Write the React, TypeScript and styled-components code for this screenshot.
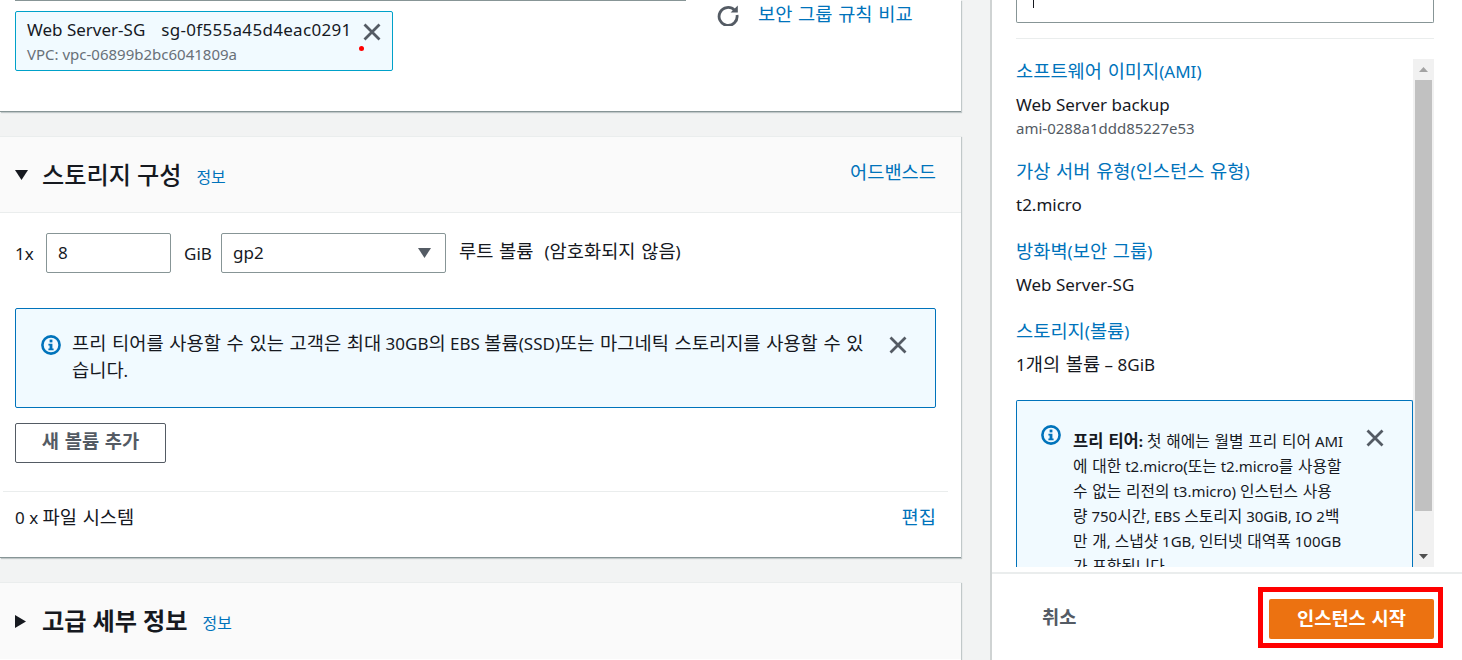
import React from "react";
import styled, { createGlobalStyle } from "styled-components";

const Global = createGlobalStyle`
  html, body { margin: 0; padding: 0; background: #f2f3f3; overflow: hidden; }
  * { box-sizing: border-box; }
  body { font-family: "Noto Sans", "Noto Sans CJK KR", sans-serif; font-size: 17px; color: #16191f; }
`;

const Ko = styled.span`
  font-family: "Noto Sans CJK KR", "Noto Sans", sans-serif;
  font-size: 1.1em;
  word-spacing: 0.08em;
  line-height: 1;
`;
const T = ({ children }: { children: string }) => (
  <>
    {children.split(/([가-힣]+(?: +[가-힣]+)*)/).map((part, i) =>
      i % 2 ? <Ko key={i}>{part}</Ko> : part
    )}
  </>
);

const Page = styled.div`
  display: flex;
  width: 1462px;
  height: 660px;
  overflow: hidden;
  background: #f2f3f3;
`;
const Main = styled.main`
  width: 961px;
  flex: none;
  display: flex;
  flex-direction: column;
  gap: 24px;
`;
const Panel = styled.section<{ $h: number }>`
  height: ${(p) => p.$h}px;
  flex: none;
  background: #fff;
  border-bottom: 1px solid #879596;
  box-shadow: 1px 1px 1px 0 rgba(0, 28, 36, 0.2);
  display: flex;
  flex-direction: column;
`;
const TopRow = styled.div`
  display: flex;
  padding-left: 15px;
  align-items: flex-start;
`;
const TopLeft = styled.div`
  width: 671px;
  flex: none;
  border-top: 1px solid #879596;
  padding-top: 10px;
`;
const Token = styled.div`
  width: 378px;
  height: 60px;
  border: 1px solid #00a1c9;
  border-radius: 2px;
  background: #f1faff;
  padding: 7px 0 0 11px;
  position: relative;
`;
const TokenMain = styled.div`
  display: flex;
  gap: 16px;
  line-height: 22px;
  font-size: 17px;
`;
const TokenId = styled.span`
  letter-spacing: 0.3px;
`;
const TokenSub = styled.div`
  font-size: 15px;
  line-height: 20px;
  margin-top: 3px;
  color: #687078;
`;
const TokenClose = styled.span`
  position: absolute;
  right: 11px;
  top: 11px;
  display: flex;
`;
const RedDot = styled.span`
  position: absolute;
  left: 343px;
  top: 34px;
  width: 5px;
  height: 5px;
  border-radius: 50%;
  background: #f00;
`;
const Compare = styled.div`
  display: flex;
  align-items: center;
  gap: 19px;
  margin: 3px 0 0 31px;
`;
const BlueLink = styled.a`
  color: #0073bb;
  font-size: 17px;
  line-height: 24px;
`;
const PanelHeader = styled.header<{ $h: number }>`
  height: ${(p) => p.$h}px;
  flex: none;
  background: #fafafa;
  border-top: 1px solid #eaeded;
  display: flex;
  align-items: center;
  padding: 0 25px 0 15px;
`;
const Caret = styled.span`
  width: 27px;
  flex: none;
  display: flex;
`;
const Title = styled.h2<{ $weight: number }>`
  font-size: 22px;
  line-height: 30px;
  font-weight: ${(p) => p.$weight};
  margin: 0 15px 0 0;
  ${Ko} {
    word-spacing: 0.02em;
  }
`;
const InfoLink = styled.a`
  color: #0073bb;
  font-size: 14.5px;
  line-height: 20px;
  margin-top: 4px;
`;
const HeaderAction = styled.a`
  margin-left: auto;
  color: #0073bb;
  font-size: 17px;
  line-height: 24px;
  margin-top: -4px;
`;
const StorageBody = styled.div`
  border-top: 1px solid #eaeded;
  padding: 20px 25px 0 15px;
  display: flex;
  flex-direction: column;
`;
const VolumeRow = styled.div`
  display: flex;
  align-items: center;
  height: 40px;
`;
const Plain = styled.span<{ $w: number }>`
  width: ${(p) => p.$w}px;
  flex: none;
`;
const NumberField = styled.div`
  width: 125px;
  height: 40px;
  flex: none;
  border: 1px solid #879596;
  border-radius: 2px;
  padding: 7px 11px;
  line-height: 24px;
  margin-right: 13px;
`;
const SelectField = styled.div`
  width: 225px;
  height: 40px;
  flex: none;
  border: 1px solid #879596;
  border-radius: 2px;
  padding: 7px 14px 7px 11px;
  line-height: 24px;
  margin: 0 13px 0 0;
  display: flex;
  justify-content: space-between;
  align-items: center;
`;
const RootLabel = styled.span`
  margin-top: -4px;
  display: flex;
  gap: 11px;
`;
const InfoBox = styled.div`
  margin-top: 35px;
  height: 100px;
  border: 1px solid #0073bb;
  border-radius: 2px;
  background: #f1faff;
  padding: 21px 28px 0 25px;
  display: flex;
  align-items: flex-start;
`;
const InfoText = styled.p`
  margin: 0 0 0 11px;
  flex: 1;
  line-height: 27px;
  white-space: nowrap;
`;
const IconSlot = styled.span<{ $mt: number }>`
  display: flex;
  flex: none;
  margin-top: ${(p) => p.$mt}px;
`;
const GhostButton = styled.button`
  margin-top: 15px;
  width: 151px;
  height: 40px;
  padding: 0 0 4px;
  background: #fff;
  border: 1px solid #545b64;
  border-radius: 2px;
  font: 700 17px "Noto Sans", "Noto Sans CJK KR", sans-serif;
  color: #545b64;
`;
const Divider = styled.div`
  height: 1px;
  background: #eaeded;
  margin: 28px -12px 0 -12px;
`;
const FsRow = styled.div`
  display: flex;
  justify-content: space-between;
  margin-top: 14px;
  line-height: 24px;
`;
const Side = styled.aside`
  margin-left: 29px;
  width: 472px;
  flex: none;
  height: 660px;
  background: #fff;
  border-left: 2px solid #cfd3d3;
  display: flex;
  flex-direction: column;
`;
const SideTop = styled.div`
  padding: 0 28px 0 24px;
`;
const NameField = styled.div`
  height: 23px;
  border: 1px solid #879596;
  border-top: 0;
  border-radius: 0 0 2px 2px;
  position: relative;
`;
const Cursor = styled.span`
  position: absolute;
  left: 16px;
  top: 0;
  width: 1px;
  height: 8px;
  background: #16191f;
`;
const SideRule = styled.div`
  height: 1px;
  background: #eaeded;
  margin-top: 15px;
`;
const Summary = styled.div`
  margin: 20px 28px 0 24px;
  height: 508px;
  display: flex;
  flex: none;
`;
const SummaryBody = styled.div`
  width: 397px;
  flex: none;
  padding-top: 1px;
`;
const SumTitle = styled.div`
  color: #0073bb;
  line-height: 24px;
`;
const SumValue = styled.div`
  line-height: 24px;
  margin-top: 9px;
`;
const SumSub = styled.div`
  font-size: 15px;
  line-height: 18px;
  color: #545b64;
  margin-top: 2px;
`;
const SumBlock = styled.div`
  margin-bottom: 23px;
`;
const SideInfo = styled.div`
  margin-top: 7px;
  border: 1px solid #0073bb;
  border-bottom: 0;
  border-radius: 2px 2px 0 0;
  background: #f1faff;
  height: 167px;
  padding: 24px 28px 0 24px;
  display: flex;
  align-items: flex-start;
  overflow: hidden;
`;
const SideInfoText = styled.p`
  margin: 4px 0 0 12px;
  font-size: 15px;
  line-height: 25px;
  white-space: nowrap;
  flex: 1;
  ${Ko} {
    font-size: 1.05em;
  }
  strong ${Ko} {
    font-size: 1.1em;
  }
`;
const ScrollTrack = styled.div`
  width: 21px;
  flex: none;
  background: #f1f1f1;
  display: flex;
  flex-direction: column;
  align-items: center;
  padding: 0 2px;
`;
const ScrollArrow = styled.span`
  height: 21px;
  flex: none;
  display: flex;
  align-items: center;
  justify-content: center;
`;
const ScrollThumb = styled.div`
  width: 17px;
  height: 431px;
  flex: none;
  background: #c1c1c1;
`;
const ScrollSpacer = styled.div`
  flex: 1;
`;
const Footer = styled.footer`
  margin-top: 5px;
  border-top: 2px solid #eaeded;
  height: 88px;
  flex: none;
  display: flex;
  align-items: flex-start;
  justify-content: space-between;
  padding: 13px 19px 0 50px;
`;
const Cancel = styled.span`
  font-weight: 700;
  font-size: 17px;
  color: #545b64;
  margin-top: 19px;
`;
const Highlight = styled.div`
  border: 5px solid #f00;
  padding: 7px 4px 4px 6px;
  width: 185px;
  height: 61px;
`;
const Primary = styled.button`
  width: 165px;
  height: 40px;
  padding: 0 0 2px;
  background: #ec7211;
  color: #fff;
  border: 0;
  border-radius: 2px;
  font: 700 17px "Noto Sans", "Noto Sans CJK KR", sans-serif;
`;

const Close = () => (
  <svg width="18" height="18" viewBox="0 0 18 18" fill="none">
    <path d="M1.5 1.5 16.5 16.5M16.5 1.5 1.5 16.5" stroke="#545b64" strokeWidth="2.8" />
  </svg>
);
const Info = () => (
  <svg width="20" height="20" viewBox="0 0 20 20" fill="none">
    <circle cx="10" cy="10" r="8.6" stroke="#0073bb" strokeWidth="2.6" />
    <rect x="8.6" y="4.6" width="2.8" height="2.8" fill="#0073bb" />
    <path d="M7.4 8.8h4v4.6h1.2v1.8H7.4v-1.800h1.200v-2.800H7.400z" fill="#0073bb" />
  </svg>
);
const Refresh = () => (
  <svg width="22" height="22" viewBox="0 0 22 22" fill="none">
    <path d="M17.6 6.2A9 9 0 1 0 20 11" stroke="#545b64" strokeWidth="2.8" />
    <path d="M20.8 1.4v7.2h-7.2z" fill="#545b64" />
  </svg>
);

export default function App() {
  return (
    <Page>
      <Global />
      <Main>
        <Panel $h={112}>
          <TopRow>
            <TopLeft>
              <Token>
                <TokenMain>
                  <span>Web Server-SG</span>
                  <TokenId>sg-0f555a45d4eac0291</TokenId>
                </TokenMain>
                <TokenSub>VPC: vpc-06899b2bc6041809a</TokenSub>
                <TokenClose>
                  <Close />
                </TokenClose>
                <RedDot />
              </Token>
            </TopLeft>
            <Compare>
              <Refresh />
              <BlueLink><T>보안 그룹 규칙 비교</T></BlueLink>
            </Compare>
          </TopRow>
        </Panel>
        <Panel $h={422}>
          <PanelHeader $h={76}>
            <Caret>
              <svg width="13" height="10" viewBox="0 0 13 10">
                <path d="M0 0h13L6.5 10z" fill="#16191f" />
              </svg>
            </Caret>
            <Title $weight={500}><T>스토리지 구성</T></Title>
            <InfoLink><T>정보</T></InfoLink>
            <HeaderAction><T>어드밴스드</T></HeaderAction>
          </PanelHeader>
          <StorageBody>
            <VolumeRow>
              <Plain $w={31}>1x</Plain>
              <NumberField>8</NumberField>
              <Plain $w={37}>GiB</Plain>
              <SelectField>
                gp2
                <svg width="13" height="10" viewBox="0 0 13 10">
                  <path d="M0 0h13L6.5 10z" fill="#545b64" />
                </svg>
              </SelectField>
              <RootLabel>
                <span><T>루트 볼륨</T></span>
                <span>(<T>암호화되지 않음</T>)</span>
              </RootLabel>
            </VolumeRow>
            <InfoBox>
              <IconSlot $mt={5}>
                <Info />
              </IconSlot>
              <InfoText>
                <T>프리 티어를 사용할 수 있는 고객은 최대 30GB의 EBS 볼륨(SSD)또는 마그네틱 스토리지를 사용할 수 있</T>
                <br />
                <T>습니다.</T>
              </InfoText>
              <IconSlot $mt={6}>
                <Close />
              </IconSlot>
            </InfoBox>
            <GhostButton><T>새 볼륨 추가</T></GhostButton>
            <Divider />
            <FsRow>
              <span>0 x <T>파일 시스템</T></span>
              <BlueLink><T>편집</T></BlueLink>
            </FsRow>
          </StorageBody>
        </Panel>
        <Panel $h={90}>
          <PanelHeader $h={77}>
            <Caret>
              <svg width="11" height="13" viewBox="0 0 11 13">
                <path d="M0 0v13l11-6.5z" fill="#16191f" />
              </svg>
            </Caret>
            <Title $weight={700}><T>고급 세부 정보</T></Title>
            <InfoLink><T>정보</T></InfoLink>
          </PanelHeader>
        </Panel>
      </Main>
      <Side>
        <SideTop>
          <NameField>
            <Cursor />
          </NameField>
          <SideRule />
        </SideTop>
        <Summary>
          <SummaryBody>
            <SumBlock>
              <SumTitle><T>소프트웨어 이미지(AMI)</T></SumTitle>
              <SumValue>Web Server backup</SumValue>
              <SumSub>ami-0288a1ddd85227e53</SumSub>
            </SumBlock>
            <SumBlock>
              <SumTitle><T>가상 서버 유형(인스턴스 유형)</T></SumTitle>
              <SumValue>t2.micro</SumValue>
            </SumBlock>
            <SumBlock>
              <SumTitle><T>방화벽(보안 그룹)</T></SumTitle>
              <SumValue>Web Server-SG</SumValue>
            </SumBlock>
            <SumBlock>
              <SumTitle><T>스토리지(볼륨)</T></SumTitle>
              <SumValue><T>1개의 볼륨</T> – 8GiB</SumValue>
            </SumBlock>
            <SideInfo>
              <Info />
              <SideInfoText>
                <strong><T>프리 티어:</T></strong> <T>첫 해에는 월별 프리 티어 AMI</T>
                <br />
                <T>에 대한 t2.micro(또는 t2.micro를 사용할</T>
                <br />
                <T>수 없는 리전의 t3.micro) 인스턴스 사용</T>
                <br />
                <T>량 750시간, EBS 스토리지 30GiB, IO 2백</T>
                <br />
                <T>만 개, 스냅샷 1GB, 인터넷 대역폭 100GB</T>
                <br />
                <T>가 포함됩니다.</T>
              </SideInfoText>
              <IconSlot $mt={4}>
                <Close />
              </IconSlot>
            </SideInfo>
          </SummaryBody>
          <ScrollTrack>
            <ScrollArrow>
              <svg width="9" height="5" viewBox="0 0 9 5">
                <path d="M4.5 0 9 5H0z" fill="#a3a3a3" />
              </svg>
            </ScrollArrow>
            <ScrollThumb />
            <ScrollSpacer />
            <ScrollArrow>
              <svg width="9" height="5" viewBox="0 0 9 5">
                <path d="M0 0h9L4.500 5z" fill="#505050" />
              </svg>
            </ScrollArrow>
          </ScrollTrack>
        </Summary>
        <Footer>
          <Cancel><T>취소</T></Cancel>
          <Highlight>
            <Primary><T>인스턴스 시작</T></Primary>
          </Highlight>
        </Footer>
      </Side>
    </Page>
  );
}
